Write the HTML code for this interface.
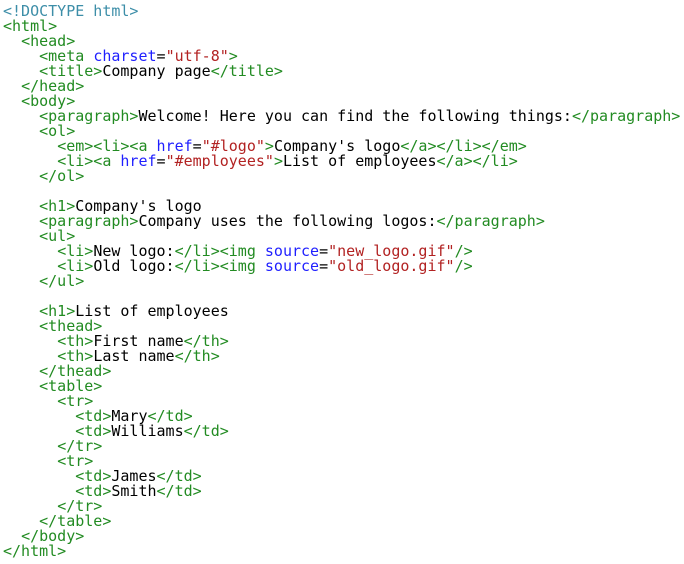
<!DOCTYPE html>
<html><head><meta charset="utf-8"><style>
body{margin:0;background:#fff;width:684px;height:564px;overflow:hidden}
pre{margin:0;padding:4px 0 0 3px;font-family:"DejaVu Sans Mono","Liberation Mono",monospace;font-size:15px;line-height:15px;color:#000}
.d{color:#3d8ea8}.t{color:#228b22}.a{color:#1f1fff}.v{color:#b22222}
</style></head><body><pre><span class="d">&lt;!DOCTYPE html&gt;</span>
<span class="t">&lt;html&gt;</span>
  <span class="t">&lt;head&gt;</span>
    <span class="t">&lt;meta</span> <span class="a">charset</span>=<span class="v">"utf-8"</span><span class="t">&gt;</span>
    <span class="t">&lt;title&gt;</span>Company page<span class="t">&lt;/title&gt;</span>
  <span class="t">&lt;/head&gt;</span>
  <span class="t">&lt;body&gt;</span>
    <span class="t">&lt;paragraph&gt;</span>Welcome! Here you can find the following things:<span class="t">&lt;/paragraph&gt;</span>
    <span class="t">&lt;ol&gt;</span>
      <span class="t">&lt;em&gt;&lt;li&gt;&lt;a</span> <span class="a">href</span>=<span class="v">"#logo"</span><span class="t">&gt;</span>Company's logo<span class="t">&lt;/a&gt;&lt;/li&gt;&lt;/em&gt;</span>
      <span class="t">&lt;li&gt;&lt;a</span> <span class="a">href</span>=<span class="v">"#employees"</span><span class="t">&gt;</span>List of employees<span class="t">&lt;/a&gt;&lt;/li&gt;</span>
    <span class="t">&lt;/ol&gt;</span>

    <span class="t">&lt;h1&gt;</span>Company's logo
    <span class="t">&lt;paragraph&gt;</span>Company uses the following logos:<span class="t">&lt;/paragraph&gt;</span>
    <span class="t">&lt;ul&gt;</span>
      <span class="t">&lt;li&gt;</span>New logo:<span class="t">&lt;/li&gt;&lt;img</span> <span class="a">source</span>=<span class="v">"new_logo.gif"</span><span class="t">/&gt;</span>
      <span class="t">&lt;li&gt;</span>Old logo:<span class="t">&lt;/li&gt;&lt;img</span> <span class="a">source</span>=<span class="v">"old_logo.gif"</span><span class="t">/&gt;</span>
    <span class="t">&lt;/ul&gt;</span>

    <span class="t">&lt;h1&gt;</span>List of employees
    <span class="t">&lt;thead&gt;</span>
      <span class="t">&lt;th&gt;</span>First name<span class="t">&lt;/th&gt;</span>
      <span class="t">&lt;th&gt;</span>Last name<span class="t">&lt;/th&gt;</span>
    <span class="t">&lt;/thead&gt;</span>
    <span class="t">&lt;table&gt;</span>
      <span class="t">&lt;tr&gt;</span>
        <span class="t">&lt;td&gt;</span>Mary<span class="t">&lt;/td&gt;</span>
        <span class="t">&lt;td&gt;</span>Williams<span class="t">&lt;/td&gt;</span>
      <span class="t">&lt;/tr&gt;</span>
      <span class="t">&lt;tr&gt;</span>
        <span class="t">&lt;td&gt;</span>James<span class="t">&lt;/td&gt;</span>
        <span class="t">&lt;td&gt;</span>Smith<span class="t">&lt;/td&gt;</span>
      <span class="t">&lt;/tr&gt;</span>
    <span class="t">&lt;/table&gt;</span>
  <span class="t">&lt;/body&gt;</span>
<span class="t">&lt;/html&gt;</span></pre></body></html>
